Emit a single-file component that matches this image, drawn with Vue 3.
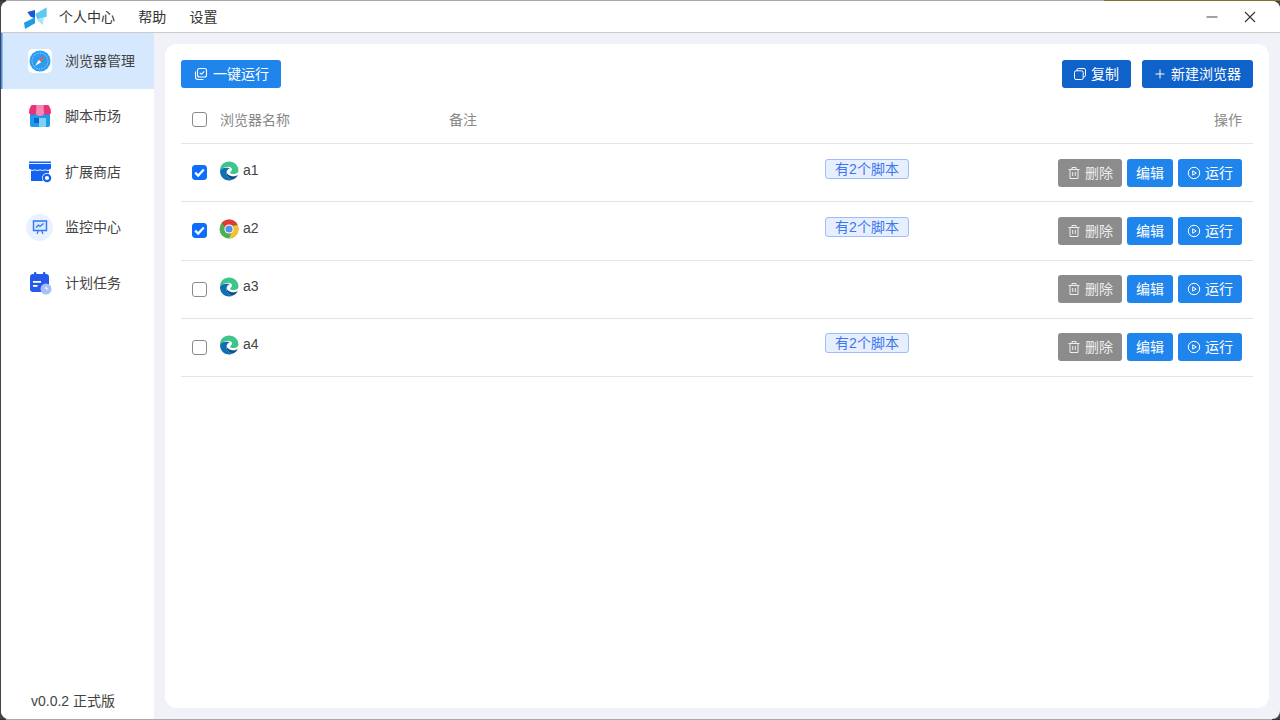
<script setup>
import { ref } from 'vue'

const nav = [
  { key: 'browser', label: '浏览器管理' },
  { key: 'market', label: '脚本市场' },
  { key: 'store', label: '扩展商店' },
  { key: 'monitor', label: '监控中心' },
  { key: 'plan', label: '计划任务' }
]
const rows = ref([
  { name: 'a1', icon: 'edge', checked: true, tag: true },
  { name: 'a2', icon: 'chrome', checked: true, tag: true },
  { name: 'a3', icon: 'edge', checked: false, tag: false },
  { name: 'a4', icon: 'edge', checked: false, tag: true }
])
</script>

<template>
  <div class="desktop">
    <div class="window">
      <header class="titlebar">
        <svg class="logo" width="24" height="22" viewBox="0 0 24 22">
          <path d="M3.3 5 L11 3 L11 11.3 L6.7 9.7 Z" fill="#1a57d6" />
          <path d="M0 15.7 L11 10.3 L11 16.3 L1 22 Z" fill="#1e9be8" />
          <path d="M11.3 7 L22.7 .3 L22.7 9.7 L13.3 12.3 Z" fill="#5ec8f2" />
          <path d="M12.7 13 L20 10.3 L18.7 18 Z" fill="#a5e3f7" />
        </svg>
        <nav class="menu">
          <span class="t">个人中心</span>
          <span class="t">帮助</span>
          <span class="t">设置</span>
        </nav>
        <div class="winctl">
          <svg width="12" height="12" viewBox="0 0 12 12"><path d="M.5 6H11.5" stroke="#444" stroke-width="1.2" /></svg>
          <svg width="12" height="12" viewBox="0 0 12 12"><path d="M1 1L11 11M11 1L1 11" stroke="#333" stroke-width="1.1" /></svg>
        </div>
      </header>
      <div class="body">
        <aside class="sidebar">
          <div v-for="(n, i) in nav" :key="n.key" class="nav-item" :class="{ active: i === 0 }">
            <span class="nav-icon">
              <svg v-if="n.key === 'browser'" width="24" height="24" viewBox="0 0 24 24">
                <rect width="24" height="24" rx="5" fill="#fff" />
                <circle cx="12" cy="12" r="10.5" fill="#2b9cf2" />
                <circle cx="12" cy="12" r="8" fill="none" stroke="#bfe2fb" stroke-width="1" stroke-dasharray="1 1.5" />
                <path d="M17 7 L13.2 13.2 L10.8 10.8 Z" fill="#ef5a4c" />
                <path d="M7 17 L10.8 10.8 L13.2 13.2 Z" fill="#fff" />
              </svg>
              <svg v-else-if="n.key === 'market'" width="24" height="24" viewBox="0 0 24 24">
                <rect x="2" y="9" width="20" height="14" rx="2" fill="#1d9be6" />
                <rect x="11" y="14" width="7" height="9" fill="#7fd0f5" />
                <rect x="6" y="14" width="5" height="5" fill="#0d63d8" />
                <path d="M3.5 1 H20.5 Q23 4 23 9 A3.7 3 0 0 1 16 9 A4 3 0 0 1 8 9 A3.7 3 0 0 1 1 9 Q1 4 3.5 1Z" fill="#e8327c" />
                <path d="M8.5 1 H15.5 L16 9 A4 3 0 0 1 8 9Z" fill="#f78ab5" />
              </svg>
              <svg v-else-if="n.key === 'store'" width="24" height="24" viewBox="0 0 24 24">
                <path d="M3 8 H21 V21 H3 Z" fill="#1263f1" />
                <rect x="1" y="1.5" width="22" height="1.6" fill="#1263f1" />
                <path d="M1 4 H23 V8.5 Q20 10.8 17 8.8 Q14.5 10.8 12 8.8 Q9.5 10.8 7 8.8 Q4 10.8 1 8.5Z" fill="#1263f1" />
                <path d="M1 9.5 Q4 11.5 7 9.8 Q9.5 11.5 12 9.8 Q14.5 11.5 17 9.8 Q20 11.5 23 9.5" stroke="#fff" fill="none" stroke-width=".9" />
                <circle cx="19" cy="18" r="5" fill="#fff" />
                <circle cx="19" cy="18" r="3.2" fill="none" stroke="#1263f1" stroke-width="2.2" />
              </svg>
              <span v-else-if="n.key === 'monitor'" class="monitor-bg">
                <svg width="16" height="16" viewBox="0 0 16 16">
                  <path d="M1.5 2 H14.5 V11.5 H1.5 Z" fill="#dbe8ff" stroke="#2f78f0" stroke-width="1.4" />
                  <path d="M4 8.5 L6.5 6 L8 7.5 L11.5 4.5" fill="none" stroke="#2f78f0" stroke-width="1.2" />
                  <path d="M6.5 11.5 L5 15 M9.5 11.5 L11 15" stroke="#2f78f0" stroke-width="1.2" />
                </svg>
              </span>
              <svg v-else width="24" height="24" viewBox="0 0 24 24">
                <rect x="2" y="3" width="19" height="18" rx="3" fill="#2459ee" />
                <rect x="6" y="1" width="2.4" height="5" rx="1" fill="#2459ee" />
                <rect x="15" y="1" width="2.4" height="5" rx="1" fill="#2459ee" />
                <rect x="5" y="10" width="8" height="1.8" fill="#fff" />
                <rect x="5" y="14" width="4.5" height="1.8" fill="#fff" />
                <circle cx="18" cy="18" r="5.5" fill="#a9bdf7" />
                <path d="M18 15.5 V18 H20.2" fill="none" stroke="#fff" stroke-width="1" />
              </svg>
            </span>
            <span class="nav-label t">{{ n.label }}</span>
          </div>
          <div class="version">v0.0.2 正式版</div>
        </aside>
        <main class="content">
          <section class="card">
            <div class="toolbar">
              <button class="btn primary large run-all">
                <svg width="14" height="14" viewBox="0 0 14 14" fill="none" stroke="#fff" stroke-width="1.1">
                  <rect x="3.5" y="1.5" width="9" height="8.5" rx="2" />
                  <path d="M5.8 5.8 L7.5 7.3 L10.2 4.3" />
                  <path d="M1.5 4.5 V10 Q1.5 12.5 4 12.5 H9.5" />
                </svg>
                <span class="t">一键运行</span>
              </button>
              <div class="toolbar-right">
                <button class="btn dark large">
                  <svg width="14" height="14" viewBox="0 0 14 14" fill="none" stroke="#fff" stroke-width="1">
                    <rect x="1.5" y="3.8" width="8.7" height="8.7" rx="1.5" />
                    <path d="M4 3.8 V2.8 Q4 1.5 5.3 1.5 H11 Q12.5 1.5 12.5 3 V8.7 Q12.5 10 10.2 10" />
                  </svg>
                  <span class="t">复制</span>
                </button>
                <button class="btn dark large">
                  <svg width="14" height="14" viewBox="0 0 14 14" fill="none" stroke="#fff" stroke-width="1">
                    <path d="M7 2.5 V11.5 M2.5 7 H11.5" />
                  </svg>
                  <span class="t">新建浏览器</span>
                </button>
              </div>
            </div>
            <div class="table-head">
              <span class="check"></span>
              <span class="col-name t">浏览器名称</span>
              <span class="col-note t">备注</span>
              <span class="col-op t">操作</span>
            </div>
            <div v-for="r in rows" :key="r.name" class="row">
              <span class="check" :class="{ on: r.checked }">
                <svg v-if="r.checked" width="13" height="13" viewBox="1 1 13 13">
                  <path d="M3.2 7.6 L6.2 10.6 L11.8 4.6" fill="none" stroke="#fff" stroke-width="2.2" />
                </svg>
              </span>
              <span class="row-name">
                <svg v-if="r.icon === 'edge'" width="20" height="20" viewBox="0 0 20 20">
                  <path d="M1 10 C1 4 5 .5 10 .5 C15.5 .5 19.5 4.5 19.5 9.5 C19.5 12 17 13 14.5 13 C12.5 13 11 12.5 11.2 11.5 C11.5 10.3 13 10.2 13 8.5 C13 6.5 10.5 5.5 8 6 C4.5 6.5 1.5 8 1 10Z" fill="#3ec58c" />
                  <path d="M1 10 C1 15.5 5 19.5 10 19.5 C11.5 19.5 13 19 14 18.5 C11 18.5 7.5 16 7.5 12 C7.5 9.5 9 7.5 11 7 C6 6 1.5 7 1 10Z" fill="#0f6fb2" />
                  <path d="M14 18.5 C11 18.5 7.5 16 7.5 12 C7.5 11 8 14 12 15 C15 15.8 18 15 19 13.5 C18 16 16 18 14 18.5Z" fill="#0c4f8f" />
                </svg>
                <svg v-else width="20" height="20" viewBox="0 0 20 20">
                  <circle cx="10" cy="10" r="9.5" fill="#4caf50" />
                  <path d="M10 .5 A9.5 9.5 0 0 1 18.7 6 H10 A4 4 0 0 0 6.3 8.4 L2.6 4 A9.5 9.5 0 0 1 10 .5Z" fill="#e53935" />
                  <path d="M18.7 6 A9.5 9.5 0 0 1 10 19.5 L13.6 12 A4 4 0 0 0 13 7.5 Z" fill="#fbc02d" />
                  <circle cx="10" cy="10" r="4.6" fill="#fff" />
                  <circle cx="10" cy="10" r="3.6" fill="#5b8def" />
                </svg>
                <span class="t">{{ r.name }}</span>
              </span>
              <span class="tag-cell">
                <span v-if="r.tag" class="tag"><span class="t">有2个脚本</span></span>
              </span>
              <span class="ops">
                <button class="btn grey small">
                  <svg width="14" height="14" viewBox="0 0 14 14" fill="none" stroke="#eee" stroke-width="1">
                    <path d="M1.5 3.5 H12.5 M5 3.5 V1.5 H9 V3.5 M3 3.5 V12.5 H11 V3.5 M5.7 6 V10 M8.3 6 V10" />
                  </svg>
                  <span class="t">删除</span>
                </button>
                <button class="btn primary small"><span class="t">编辑</span></button>
                <button class="btn primary small">
                  <svg width="14" height="14" viewBox="0 0 14 14" fill="none" stroke="#fff" stroke-width="1">
                    <circle cx="7" cy="7" r="5.7" />
                    <path d="M5.7 4.8 L9.2 7 L5.7 9.2 Z" />
                  </svg>
                  <span class="t">运行</span>
                </button>
              </span>
            </div>
          </section>
        </main>
      </div>
    </div>
  </div>
</template>

<style>
html, body { margin: 0; background: #333; }
</style>

<style scoped>
.desktop {
  width: 1280px;
  height: 720px;
  box-sizing: border-box;
  padding: 1px 0 1px 1px;
  background:
    linear-gradient(90deg, #333 0 6px, #aaa 6px 1104px, #8b6b32 1104px) top / 100% 1px no-repeat,
    linear-gradient(90deg, #333 0 6px, #aaa 6px 1272px, #333 1272px) bottom / 100% 1px no-repeat,
    #444;
  overflow: hidden;
  font-family: "Liberation Sans", "Noto Sans CJK SC", sans-serif;
  font-size: 14px;
  color: #444;
}
.t { margin-top: -2px; }
.window {
  width: 1279px;
  height: 718px;
  background: #f0f2f7;
  border-radius: 8px;
  overflow: hidden;
  display: flex;
  flex-direction: column;
}
.titlebar {
  height: 32px;
  box-sizing: border-box;
  flex: none;
  background: #fff;
  border-bottom: 1px solid #ccc;
  display: flex;
  align-items: center;
  padding: 0 24px 0 23px;
}
.logo { flex: none; margin-top: 3px; }
.menu {
  display: flex;
  align-items: center;
  gap: 23.3px;
  margin-left: 11px;
  color: #333;
}
.winctl {
  margin-left: auto;
  display: flex;
  gap: 26px;
  align-items: center;
}
.body { flex: 1; display: flex; min-height: 0; }
.sidebar {
  width: 153px;
  flex: none;
  background: #fff;
  display: flex;
  flex-direction: column;
}
.nav-item {
  height: 55.5px;
  flex: none;
  display: flex;
  align-items: center;
  padding-left: 26px;
  gap: 13px;
  color: #444;
}
.nav-item.active {
  background: #d6e8fd;
  box-shadow: inset 1.5px 0 0 #4a90ee;
}
.nav-icon { width: 25px; height: 25px; display: flex; align-items: center; justify-content: center; }
.monitor-bg {
  width: 27px;
  height: 27px;
  flex: none;
  border-radius: 50%;
  background: #e8f1fe;
  display: flex;
  align-items: center;
  justify-content: center;
}
.version { margin-top: auto; padding: 0 0 8px 30px; color: #444; line-height: 20px; }
.content { flex: 1; padding: 11px; min-width: 0; }
.card {
  height: 100%;
  box-sizing: border-box;
  background: #fff;
  border-radius: 12px;
  padding: 16px 16px 0 16px;
}
.toolbar { display: flex; justify-content: space-between; }
.toolbar-right { display: flex; gap: 11px; }
.btn {
  border: 0;
  font: inherit;
  color: #fff;
  border-radius: 3px;
  display: inline-flex;
  align-items: center;
  justify-content: center;
  gap: 4px;
  padding: 0 9px;
}
.btn.large { height: 28px; padding: 0 12px 0 11px; }
.btn.run-all { padding-left: 13px; gap: 5px; }
.btn.small { height: 28px; }
.primary { background: #1f85ec; }
.dark { background: #0f62c9; }
.grey { background: #8c8c8c; color: #eee; }
.table-head {
  display: flex;
  align-items: center;
  padding: 8px 0 0 11px;
  height: 47px;
  border-bottom: 1px solid #e4e4e4;
  color: #888;
}
.check {
  width: 15px;
  height: 15px;
  box-sizing: border-box;
  flex: none;
  border: 1.5px solid #8a8a8a;
  border-radius: 3px;
  background: #fff;
  display: flex;
  align-items: center;
  justify-content: center;
}
.check.on { background: #0d6efd; border-color: #0d6efd; }
.col-name { margin-left: 13px; width: 229px; }
.col-note { flex: 1; }
.col-op { margin-right: 11px; }
.row {
  height: 57.25px;
  display: flex;
  align-items: center;
  padding-left: 11px;
  border-bottom: 1px solid #e4e4e4;
}
.row-name {
  margin-left: 12px;
  width: 606px;
  flex: none;
  display: flex;
  align-items: center;
  gap: 4px;
  margin-top: -4px;
  color: #444;
}
.tag-cell {
  flex: 1;
  display: flex;
  margin-top: -8px;
  min-height: 20px;
}
.tag {
  width: 84px;
  height: 20px;
  box-sizing: border-box;
  border: 1px solid #9dbcf8;
  border-radius: 3px;
  background: #e7efff;
  color: #3b77ee;
  display: flex;
  align-items: center;
  justify-content: center;
}
.ops { display: flex; gap: 5px; margin-right: 11px; }
</style>
